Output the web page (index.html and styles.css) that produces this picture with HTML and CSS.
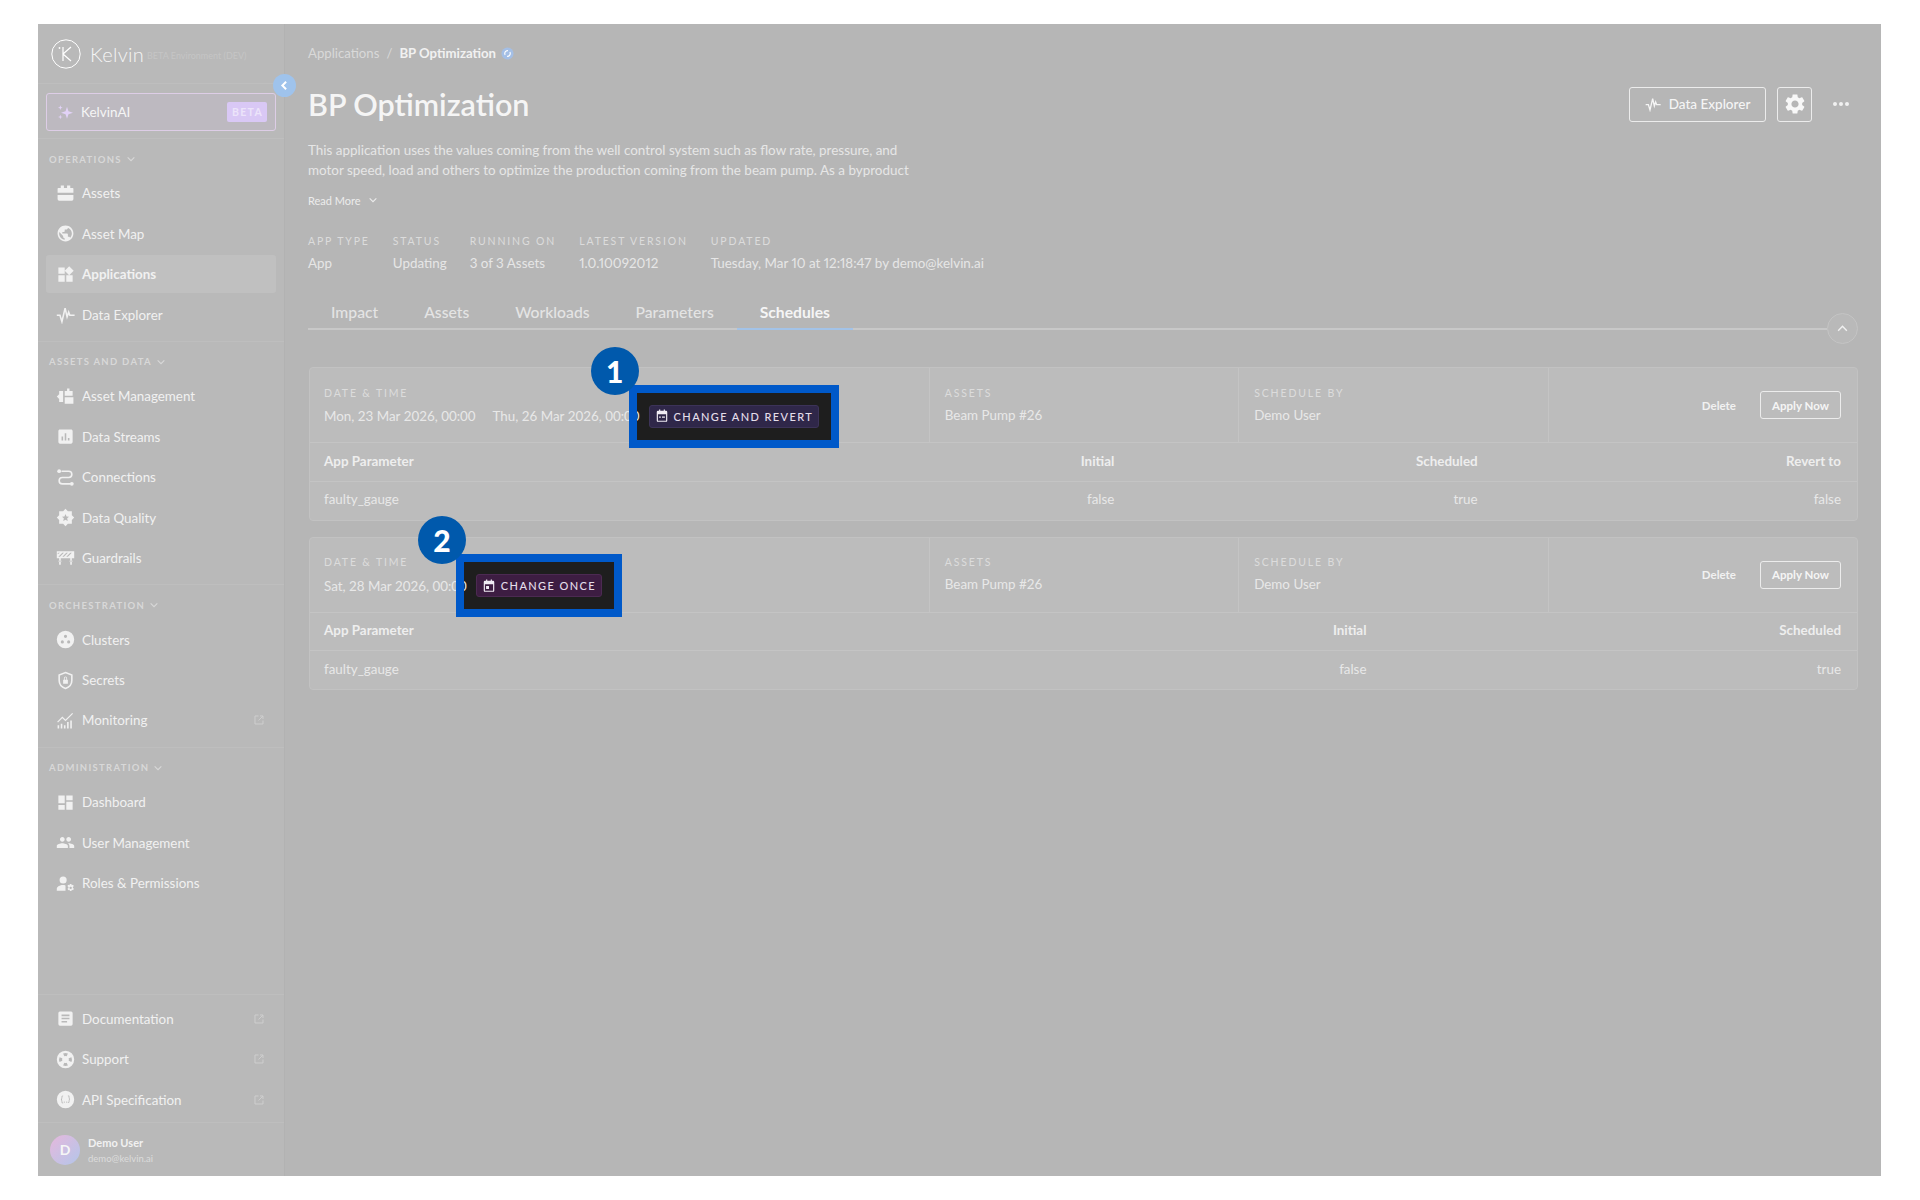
FILE: index.html
```html
<!DOCTYPE html>
<html lang="en">
<head>
    <meta charset="UTF-8">
    <title>BP Optimization</title>
    <link rel="stylesheet" href="styles.css">
</head>
<body>
<svg class="defs" width="0" height="0">
    <symbol id="ext" viewBox="0 0 24 24"><path fill="none" stroke="currentColor" stroke-width="2" d="M11 4H4v16h16v-7M14 4h6v6M20 4l-9 9"/></symbol>
    <symbol id="pulse" viewBox="0 0 24 24"><path fill="none" stroke="currentColor" stroke-width="2" d="M1 13h4l2.5 8 4-17 2.5 11 2-6 1.5 4h6"/></symbol>
    <symbol id="chev" viewBox="0 0 12 12"><path fill="none" stroke="currentColor" stroke-width="1.3" d="M2 4l4 4 4-4"/></symbol>
</svg>
<div class="window">
    <aside class="sidebar">
        <div class="logo">
            <svg class="logo-mark" viewBox="0 0 30 30"><circle cx="15" cy="15" r="14.2" fill="none" stroke="#fff" stroke-width="1"/><path fill="none" stroke="#fff" stroke-width="1.2" d="M12 8v14M20 8l-8 7 8 7"/><circle cx="8.5" cy="9" r=".9" fill="#fff"/></svg>
            <span class="logo-name">Kelvin</span>
            <span class="logo-env">BETA Environment (DEV)</span>
        </div>
        <button class="collapse-btn"><svg viewBox="0 0 12 12"><path fill="none" stroke="#fff" stroke-width="1.8" d="M7.5 2.5L4 6l3.5 3.5"/></svg></button>
        <div class="ai-wrap">
            <div class="ai-btn">
                <svg class="ai-icon" viewBox="0 0 24 24"><path fill="#e2d2f7" d="M15 4l2.200 6.800L24 13l-6.800 2.200L15 22l-2.200-6.800L6 13l6.800-2.200zM5 2l.9 2.600L8.500 5.500l-2.600.9L5 9l-.9-2.600L1.500 5.500l2.600-.9zM5 16l.9 2.600 2.600.9-2.600.9L5 23l-.9-2.600-2.600-.9 2.600-.9z"/></svg>
                <span>KelvinAI</span>
                <b class="ai-beta">BETA</b>
            </div>
        </div>

        <div class="nav-group">
            <h4>OPERATIONS <svg><use href="#chev"/></svg></h4>
            <a class="nav-item"><svg viewBox="0 0 24 24"><path d="M6 2h4v3H6zM14 2h4v3h-4zM3 5h18a1 1 0 0 1 1 1v5H2V6a1 1 0 0 1 1-1zM2 14h20v5a2 2 0 0 1-2 2H4a2 2 0 0 1-2-2z"/></svg>Assets</a>
            <a class="nav-item"><svg viewBox="0 0 24 24"><path d="M12 2C6.48 2 2 6.48 2 12s4.48 10 10 10 10-4.48 10-10S17.52 2 12 2zm-1 17.93c-3.95-.49-7-3.85-7-7.93 0-.62.08-1.21.21-1.79L9 15v1c0 1.1.9 2 2 2v1.93zm6.9-2.54c-.26-.81-1-1.39-1.9-1.39h-1v-3c0-.55-.45-1-1-1H8v-2h2c.55 0 1-.45 1-1V7h2c1.1 0 2-.9 2-2v-.41c2.93 1.19 5 4.06 5 7.41 0 2.08-.8 3.97-2.1 5.39z"/></svg>Asset Map</a>
            <a class="nav-item active"><svg viewBox="0 0 24 24"><path d="M13 13v8h8v-8h-8zM3 21h8v-8H3v8zM3 3v8h8V3H3zm13.66-1.31L11 7.34 16.66 13l5.66-5.66-5.66-5.65z"/></svg>Applications</a>
            <a class="nav-item"><svg viewBox="0 0 24 24"><use href="#pulse"/></svg>Data Explorer</a>
        </div>

        <div class="nav-group">
            <h4>ASSETS AND DATA <svg><use href="#chev"/></svg></h4>
            <a class="nav-item"><svg viewBox="0 0 24 24"><path d="M14 2h3v3h4v6H11V5h3zM11 13h11v8H11zM1 12l3-3V5h5v14H4v-4z"/></svg>Asset Management</a>
            <a class="nav-item"><svg viewBox="0 0 24 24"><path d="M19 3H5c-1.1 0-2 .9-2 2v14c0 1.1.9 2 2 2h14c1.1 0 2-.9 2-2V5c0-1.1-.9-2-2-2zM9 17H7v-5h2v5zm4 0h-2V8h2v9zm4 0h-2v-3h2v3z"/></svg>Data Streams</a>
            <a class="nav-item"><svg viewBox="0 0 24 24"><path fill="none" stroke="currentColor" stroke-width="2" d="M7 4h9a4 4 0 0 1 0 8H8a4 4 0 0 0 0 8h10"/><circle cx="4" cy="4" r="2.4"/><circle cx="20" cy="20" r="2.4"/></svg>Connections</a>
            <a class="nav-item"><svg viewBox="0 0 24 24"><path fill-rule="evenodd" d="M12 1l3 3h5v5l3 3-3 3v5h-5l-3 3-3-3H4v-5l-3-3 3-3V4h5zm0 6.5l1.3 3.1 3.2.3-2.4 2.2.7 3.3-2.8-1.7-2.8 1.7.7-3.3-2.4-2.2 3.2-.3z"/></svg>Data Quality</a>
            <a class="nav-item"><svg viewBox="0 0 24 24"><path fill-rule="evenodd" d="M1 4h22v9H1zM3 6l-1 1v1l3-2zm5 0L3 11h2l5-5zm5 0l-5 5h2l5-5zm5 0l-5 5h2l5-5zM4 13h2v8H4zM18 13h2v8h-2zM3 16h4v1H3zM17 16h4v1h-4z"/></svg>Guardrails</a>
        </div>

        <div class="nav-group">
            <h4>ORCHESTRATION <svg><use href="#chev"/></svg></h4>
            <a class="nav-item"><svg viewBox="0 0 24 24"><path fill-rule="evenodd" d="M12 1a11 11 0 1 1 0 22 11 11 0 0 1 0-22zm0 5a2 2 0 1 0 0 4 2 2 0 0 0 0-4zm-4 7a2 2 0 1 0 0 4 2 2 0 0 0 0-4zm8 0a2 2 0 1 0 0 4 2 2 0 0 0 0-4z"/></svg>Clusters</a>
            <a class="nav-item"><svg viewBox="0 0 24 24"><path fill="none" stroke="currentColor" stroke-width="2" d="M12 2l8 3v7c0 5-3.5 8.500-8 10-4.500-1.500-8-5-8-10V5z"/><path d="M9 11h6v5H9zM10 11V9a2 2 0 0 1 4 0v2h-1V9a1 1 0 0 0-2 0v2z"/></svg>Secrets</a>
            <a class="nav-item ext"><svg viewBox="0 0 24 24"><path d="M2 18h2v4H2zM6 16h2v6H6zM10 18h2v4h-2zM14 14h2v8h-2zM18 12h2v10h-2z"/><path fill="none" stroke="currentColor" stroke-width="1.5" d="M2 14l6-6 4 4 9-9"/></svg>Monitoring<svg class="ext-icon"><use href="#ext"/></svg></a>
        </div>

        <div class="nav-group last">
            <h4>ADMINISTRATION <svg><use href="#chev"/></svg></h4>
            <a class="nav-item"><svg viewBox="0 0 24 24"><path d="M3 13h8V3H3v10zm0 8h8v-6H3v6zm10 0h8V11h-8v10zm0-18v6h8V3h-8z"/></svg>Dashboard</a>
            <a class="nav-item"><svg viewBox="0 0 24 24"><path d="M16 11c1.66 0 2.99-1.34 2.99-3S17.66 5 16 5c-1.66 0-3 1.34-3 3s1.34 3 3 3zm-8 0c1.66 0 2.99-1.34 2.99-3S9.66 5 8 5C6.34 5 5 6.34 5 8s1.34 3 3 3zm0 2c-2.33 0-7 1.17-7 3.5V19h14v-2.5c0-2.33-4.67-3.5-7-3.5zm8 0c-.29 0-.62.02-.97.05 1.16.84 1.97 1.97 1.97 3.45V19h6v-2.5c0-2.33-4.67-3.5-7-3.5z"/></svg>User Management</a>
            <a class="nav-item"><svg viewBox="0 0 24 24"><path d="M9 3a4.5 4.5 0 1 1 0 9 4.5 4.5 0 0 1 0-9zM1 21v-2c0-3 4-5 8-5 1 0 2 .1 3 .4V21z"/><path fill-rule="evenodd" d="M17.500 12.500h2l.4 1.600 1.500-.6 1.100 1.700-1.200 1.100.1 1.400 1.200 1-1.100 1.800-1.500-.6-.5 1.600h-2l-.4-1.600-1.500.6-1.100-1.800 1.200-1-.1-1.400-1.200-1.100 1.100-1.700 1.500.6zm1 3.500a1.500 1.500 0 1 0 0 3 1.500 1.500 0 0 0 0-3z"/></svg>Roles &amp; Permissions</a>
        </div>

        <div class="nav-bottom">
            <a class="nav-item ext"><svg viewBox="0 0 24 24"><path fill-rule="evenodd" d="M5 3h14a2 2 0 0 1 2 2v14a2 2 0 0 1-2 2H5a2 2 0 0 1-2-2V5a2 2 0 0 1 2-2zm2 4v2h10V7zm0 4v2h10v-2zm0 4v2h7v-2z"/></svg>Documentation<svg class="ext-icon"><use href="#ext"/></svg></a>
            <a class="nav-item ext"><svg viewBox="0 0 24 24"><path fill-rule="evenodd" d="M12 1a11 11 0 1 1 0 22 11 11 0 0 1 0-22zM9 4.500L10.500 8a4.500 4.500 0 0 1 3 0L15 4.500a8 8 0 0 0-6 0zM4.500 9a8 8 0 0 0 0 6L8 13.500a4.500 4.500 0 0 1 0-3zM19.500 9L16 10.500a4.500 4.500 0 0 1 0 3L19.500 15a8 8 0 0 0 0-6zM10.500 16L9 19.500a8 8 0 0 0 6 0L13.500 16a4.500 4.500 0 0 1-3 0z"/></svg>Support<svg class="ext-icon"><use href="#ext"/></svg></a>
            <a class="nav-item ext"><svg viewBox="0 0 24 24"><path fill-rule="evenodd" d="M12 1a11 11 0 1 1 0 22 11 11 0 0 1 0-22zM9 7c-2 0-2 1-2 2.500S6.500 11.500 6 12c.5.5 1 1 1 2.500S7 17 9 17v-1c-1 0-1-.5-1-1.500S7.500 12.500 7.500 12 8 10.500 8 9.500 8 8 9 8zm6 0v1c1 0 1 .5 1 1.500s.5 1.500.5 2-.5 1.500-.5 2.500 0 1.500-1 1.500v1c2 0 2-1 2-2.500s.5-2 1-2.500c-.5-.5-1-1-1-2.500S17 7 15 7zm-4.500 7.500a.8.8 0 1 0 0 1.600.8.8 0 0 0 0-1.600zm3 0a.8.8 0 1 0 0 1.600.8.8 0 0 0 0-1.600z"/></svg>API Specification<svg class="ext-icon"><use href="#ext"/></svg></a>
        </div>

        <div class="user">
            <div class="avatar">D</div>
            <div class="user-info">
                <b>Demo User</b>
                <span>demo@kelvin.ai</span>
            </div>
        </div>
    </aside>

    <main class="main">
        <div class="breadcrumb">
            <span>Applications</span>
            <span class="sep">/</span>
            <b>BP Optimization</b>
            <svg class="sync" viewBox="0 0 14 14"><circle cx="7" cy="7" r="6.5" fill="#a4bfe6"/><path fill="none" stroke="#fff" stroke-width="1.2" d="M4.500 8.500a3 3 0 0 1 3-4.500M9.500 5.500a3 3 0 0 1-3 4.500"/></svg>
        </div>

        <div class="title-row">
            <h1>BP Optimization</h1>
            <div class="actions">
                <button class="btn-outline explorer"><svg viewBox="0 0 24 24"><use href="#pulse"/></svg>Data Explorer</button>
                <button class="btn-outline gear"><svg viewBox="0 0 24 24"><path d="M19.14 12.94c.04-.3.06-.61.06-.94 0-.32-.02-.64-.07-.94l2.03-1.58c.18-.14.23-.41.12-.61l-1.92-3.32c-.12-.22-.37-.29-.59-.22l-2.39.96c-.5-.38-1.03-.7-1.62-.94l-.36-2.54c-.04-.24-.24-.41-.48-.41h-3.84c-.24 0-.43.17-.47.41l-.36 2.54c-.59.24-1.13.57-1.62.94l-2.39-.96c-.22-.08-.47 0-.59.22L2.74 8.87c-.12.21-.08.47.12.61l2.03 1.58c-.05.3-.09.63-.09.94s.02.64.07.94l-2.03 1.58c-.18.14-.23.41-.12.61l1.92 3.32c.12.22.37.29.59.22l2.39-.96c.5.38 1.03.7 1.62.94l.36 2.54c.05.24.24.41.48.41h3.84c.24 0 .44-.17.47-.41l.36-2.54c.59-.24 1.13-.56 1.62-.94l2.39.96c.22.08.47 0 .59-.22l1.92-3.32c.12-.22.07-.47-.12-.61l-2.01-1.58zM12 15.6c-1.98 0-3.6-1.62-3.6-3.6s1.62-3.6 3.6-3.6 3.6 1.62 3.6 3.6-1.62 3.6-3.6 3.6z"/></svg></button>
                <span class="dots"><i></i><i></i><i></i></span>
            </div>
        </div>

        <p class="desc">This application uses the values coming from the well control system such as flow rate, pressure, and<br>motor speed, load and others to optimize the production coming from the beam pump. As a byproduct</p>
        <div class="read-more">Read More <svg><use href="#chev"/></svg></div>

        <div class="meta">
            <div><label>APP TYPE</label><span>App</span></div>
            <div><label>STATUS</label><span>Updating</span></div>
            <div><label>RUNNING ON</label><span>3 of 3 Assets</span></div>
            <div><label>LATEST VERSION</label><span>1.0.10092012</span></div>
            <div><label>UPDATED</label><span>Tuesday, Mar 10 at 12:18:47 by demo@kelvin.ai</span></div>
        </div>

        <div class="tabs-row">
            <div class="tabs">
                <a>Impact</a>
                <a>Assets</a>
                <a>Workloads</a>
                <a>Parameters</a>
                <a class="active">Schedules</a>
            </div>
            <button class="tabs-toggle"><svg viewBox="0 0 12 12"><path fill="none" stroke="currentColor" stroke-width="1.3" d="M2 8l4-4 4 4"/></svg></button>
        </div>

        <section class="card">
            <div class="card-head">
                <div class="cell">
                    <label>DATE &amp; TIME</label>
                    <div class="dates">
                        <span class="date">Mon, 23 Mar 2026, 00:00</span>
                        <span class="date">Thu, 26 Mar 2026, 00:00</span>
                        <div class="mark"><span class="num">1</span><span class="tag revert"><svg viewBox="0 0 24 24"><path fill-rule="evenodd" d="M7 1h2v2h6V1h2v2h2a2 2 0 0 1 2 2v15a2 2 0 0 1-2 2H5a2 2 0 0 1-2-2V5a2 2 0 0 1 2-2h2zM5 9v11h14V9zm2 4h3v2H7zm5 0h5v2h-5z"/></svg>CHANGE AND REVERT</span></div>
                    </div>
                </div>
                <div class="cell"><label>ASSETS</label><span>Beam Pump #26</span></div>
                <div class="cell"><label>SCHEDULE BY</label><span>Demo User</span></div>
                <div class="cell cell-actions"><a class="delete">Delete</a><button class="btn-outline apply">Apply Now</button></div>
            </div>
            <div class="params four head"><span>App Parameter</span><span>Initial</span><span>Scheduled</span><span>Revert to</span></div>
            <div class="params four"><span>faulty_gauge</span><span>false</span><span>true</span><span>false</span></div>
        </section>

        <section class="card">
            <div class="card-head">
                <div class="cell">
                    <label>DATE &amp; TIME</label>
                    <div class="dates">
                        <span class="date">Sat, 28 Mar 2026, 00:00</span>
                        <div class="mark"><span class="num">2</span><span class="tag once"><svg viewBox="0 0 24 24"><path fill-rule="evenodd" d="M7 1h2v2h6V1h2v2h2a2 2 0 0 1 2 2v15a2 2 0 0 1-2 2H5a2 2 0 0 1-2-2V5a2 2 0 0 1 2-2h2zM5 9v11h14V9zm2 3h5v5H7z"/></svg>CHANGE ONCE</span></div>
                    </div>
                </div>
                <div class="cell"><label>ASSETS</label><span>Beam Pump #26</span></div>
                <div class="cell"><label>SCHEDULE BY</label><span>Demo User</span></div>
                <div class="cell cell-actions"><a class="delete">Delete</a><button class="btn-outline apply">Apply Now</button></div>
            </div>
            <div class="params three head"><span>App Parameter</span><span>Initial</span><span>Scheduled</span></div>
            <div class="params three"><span>faulty_gauge</span><span>false</span><span>true</span></div>
        </section>
    </main>
</div>
</body>
</html>
```

FILE: styles.css
```css
*{
    box-sizing: border-box;
}
html,body{
    margin: 0;
    height: 100%;
    background: #fff;
}
body{
    padding: 24px 39px 24px 38px;
    font-family: "Lato", "Liberation Sans", sans-serif;
    color: #f1f1f1;
}
.defs{
    position: absolute;
}
.window{
    display: flex;
    height: 1152px;
    background: #b6b6b6;
    overflow: hidden;
}

/* sidebar */
.sidebar{
    position: relative;
    display: flex;
    flex-direction: column;
    flex: 0 0 247px;
    background: #b9b9b9;
    border-right: 1px solid #b2b2b2;
}
.logo{
    display: flex;
    align-items: center;
    flex: 0 0 60px;
    padding: 0 13px;
    border-bottom: 1px solid #bebebe;
}
.logo-mark{
    width: 30px;
    height: 30px;
}
.logo-name{
    margin-left: 9px;
    font-size: 20px;
    font-weight: 300;
    color: #f5f5f5;
    letter-spacing: .3px;
}
.logo-env{
    margin: 4px 0 0 3px;
    font-size: 9px;
    color: #c5c5c5;
}
.collapse-btn{
    position: absolute;
    top: 50px;
    left: 235px;
    width: 23px;
    height: 23px;
    padding: 5px;
    border: 0;
    border-radius: 50%;
    background: #9fc3ec;
}
.collapse-btn svg{
    display: block;
}
.ai-wrap{
    padding: 9px 8px 7px;
    border-bottom: 1px solid #bebebe;
}
.ai-btn{
    display: flex;
    align-items: center;
    height: 38px;
    padding: 0 8px 0 10px;
    border: 1px solid #ddcde6;
    border-radius: 3px;
    background: #bdb9c0;
    font-size: 13.5px;
    color: #f5f5f5;
}
.ai-icon{
    width: 16px;
    height: 16px;
    margin-right: 8px;
}
.ai-beta{
    margin-left: auto;
    padding: 4px 4px 4px 5px;
    border-radius: 2px;
    background: #d9c8f5;
    font-size: 10.5px;
    font-weight: 700;
    letter-spacing: 1.3px;
    color: #ece4fa;
}
.nav-group{
    padding: 12px 8px 5px;
    border-bottom: 1px solid #bebebe;
}
.nav-group.last{
    border-bottom: 0;
}
.nav-group h4{
    display: flex;
    align-items: center;
    gap: 4px;
    height: 16px;
    margin: 0 0 7.4px;
    padding-left: 3px;
    font-size: 9.5px;
    font-weight: 700;
    letter-spacing: 1.3px;
    color: #d8d8d8;
}
.nav-group h4 svg{
    width: 10px;
    height: 10px;
}
.nav-item{
    display: flex;
    align-items: center;
    height: 38px;
    margin-bottom: 2.4px;
    padding: 0 11px 0 9.5px;
    border-radius: 3px;
    font-size: 13.4px;
    color: #f1f1f1;
}
.nav-item.active{
    background: #c0c0c0;
    font-weight: 700;
}
.nav-item > svg:first-child{
    flex: none;
    width: 19px;
    height: 19px;
    margin-right: 7.5px;
    fill: currentColor;
}
.ext-icon{
    width: 12px;
    height: 12px;
    margin-left: auto;
    color: #cecece;
}
.nav-bottom{
    margin-top: auto;
    padding: 5px 8px 1px;
    border-top: 1px solid #bebebe;
    border-bottom: 1px solid #bebebe;
}
.user{
    display: flex;
    align-items: center;
    flex: 0 0 53px;
    padding-left: 12px;
}
.avatar{
    display: flex;
    align-items: center;
    justify-content: center;
    width: 30px;
    height: 30px;
    border-radius: 50%;
    background: linear-gradient(135deg, #e6b8dc, #b3c6ea);
    font-size: 14px;
    font-weight: 700;
    color: #f6f6f6;
}
.user-info{
    display: flex;
    flex-direction: column;
    gap: 4px;
    margin-left: 8px;
}
.user-info b{
    font-size: 11px;
}
.user-info span{
    font-size: 9.5px;
    color: #dcdcdc;
}

/* main area */
.main{
    flex: 1;
    min-width: 0;
    padding: 21px 23px 0 23px;
}
.breadcrumb{
    display: flex;
    align-items: center;
    height: 16px;
    font-size: 13.2px;
    color: #d9d9d9;
}
.breadcrumb .sep{
    margin: 0 7px;
}
.breadcrumb b{
    color: #f1f1f1;
    font-weight: 700;
}
.sync{
    width: 13px;
    height: 13px;
    margin-left: 5px;
}
.title-row{
    display: flex;
    align-items: center;
    justify-content: space-between;
    margin-top: 23px;
    height: 40px;
}
h1{
    margin: 0;
    font-size: 30.5px;
    font-weight: 600;
    color: #f5f5f5;
}
.actions{
    display: flex;
    align-items: center;
    gap: 11px;
}
.btn-outline{
    display: inline-flex;
    align-items: center;
    justify-content: center;
    border: 1px solid #ececec;
    border-radius: 3px;
    background: transparent;
    font-family: inherit;
    color: #f5f5f5;
}
.explorer{
    gap: 8px;
    width: 137px;
    height: 35px;
    font-size: 13.5px;
    font-weight: 500;
}
.explorer svg{
    width: 16px;
    height: 16px;
}
.gear{
    width: 35px;
    height: 35px;
    padding: 0;
}
.gear svg{
    width: 24px;
    height: 24px;
    fill: #f8f8f8;
}
.dots{
    display: flex;
    gap: 2px;
    margin: 0 9px 0 10px;
}
.dots i{
    width: 4px;
    height: 4px;
    border-radius: 50%;
    background: #f1f1f1;
}
.desc{
    margin: 16px 0 0;
    font-size: 13.45px;
    line-height: 20px;
    color: #e6e6e6;
}
.read-more{
    display: flex;
    align-items: center;
    gap: 7px;
    margin-top: 13px;
    height: 14px;
    font-size: 11px;
    color: #ececec;
}
.read-more svg{
    width: 10px;
    height: 10px;
}
.meta{
    display: flex;
    gap: 23px;
    margin-top: 28px;
}
.meta label,.cell label{
    display: block;
    font-size: 10.5px;
    letter-spacing: 1.85px;
    color: #dcdcdc;
}
.meta span{
    display: block;
    margin-top: 8px;
    font-size: 13.4px;
    font-variant-numeric: proportional-nums;
    color: #e6e6e6;
}
.tabs-row{
    display: flex;
    height: 47px;
    margin-top: 26px;
}
.tabs{
    display: flex;
    flex: 1;
    height: 33px;
    border-bottom: 2px solid #c8c8c8;
}
.tabs a{
    padding: 6px 23px 0;
    font-size: 15.7px;
    font-weight: 500;
    color: #e4e4e4;
}
.tabs a.active{
    height: 33px;
    border-bottom: 2px solid #a3c3e8;
    color: #f5f5f5;
    font-weight: 700;
}
.tabs-toggle{
    flex: none;
    align-self: flex-end;
    width: 31px;
    height: 31px;
    padding: 8px;
    border: 1px solid #c4c4c4;
    border-radius: 50%;
    background: #b9b9b9;
    color: #f1f1f1;
}

/* schedule cards */
.card{
    margin: 23px 0 0 1px;
    border: 1px solid #c2c2c2;
    border-radius: 4px;
    background: #bcbcbc;
    color: #e8e8e8;
}
.card + .card{
    margin-top: 16px;
}
.card-head{
    display: grid;
    grid-template-columns: 2fr 1fr 1fr 1fr;
    height: 75px;
    border-bottom: 1px solid #c4c4c4;
}
.cell{
    padding: 18.5px 15px 0;
    border-left: 1px solid #c4c4c4;
    font-size: 13.4px;
    min-width: 0;
}
.cell:first-child{
    padding-left: 14px;
    border-left: 0;
}
.cell label{
    margin-bottom: 8px;
}
.dates{
    display: flex;
    align-items: center;
    gap: 17px;
    margin-top: -2px;
}
.mark{
    position: relative;
    margin-left: -8px;
}
/* the dark backdrop sits under the date, the frame on top of it */
.mark::before{
    content: "";
    position: absolute;
    inset: -20px;
    z-index: 1;
    background: #1e1e1e;
}
.mark::after{
    content: "";
    position: absolute;
    inset: -20px;
    z-index: 3;
    border: 8px solid #0059c9;
}
.date{
    position: relative;
    z-index: 2;
}
.num{
    position: absolute;
    top: -58px;
    left: -58px;
    z-index: 5;
    width: 48px;
    height: 48px;
    border-radius: 50%;
    background: #0059ac;
    font-size: 30px;
    font-weight: 900;
    line-height: 48px;
    text-align: center;
    color: #fff;
}
.tag{
    position: relative;
    z-index: 2;
    display: flex;
    align-items: center;
    gap: 5px;
    height: 23px;
    padding: 0 5px;
    border-radius: 3px;
    font-size: 11px;
    font-weight: 500;
    letter-spacing: 1.4px;
    color: #e4deea;
    white-space: nowrap;
}
.tag svg{
    width: 14px;
    height: 14px;
    fill: #f0ecf4;
}
.tag.revert{
    background: #2f2749;
    border: 1px solid #3c3358;
}
.tag.once{
    background: #3d1d42;
    border: 1px solid #4c2a52;
}
.cell-actions{
    display: flex;
    align-items: center;
    justify-content: flex-end;
    gap: 24px;
    padding: 0 16px 0 0;
}
.delete{
    font-size: 11.5px;
    font-weight: 700;
    color: #f1f1f1;
}
.apply{
    width: 81px;
    height: 28px;
    font-size: 11.5px;
    font-weight: 700;
}
.params{
    display: grid;
    align-items: center;
    padding: 0 16px 2.5px 14px;
    height: 38px;
    font-size: 13.4px;
    text-align: right;
}
.params span:first-child{
    text-align: left;
}
.params.head{
    height: 38.5px;
    border-bottom: 1px solid #c4c4c4;
    font-weight: 700;
    color: #eeeeee;
}
.params.four{
    grid-template-columns: 427px repeat(3, 1fr);
}
.params.three{
    grid-template-columns: 568px repeat(2, 1fr);
}
```
